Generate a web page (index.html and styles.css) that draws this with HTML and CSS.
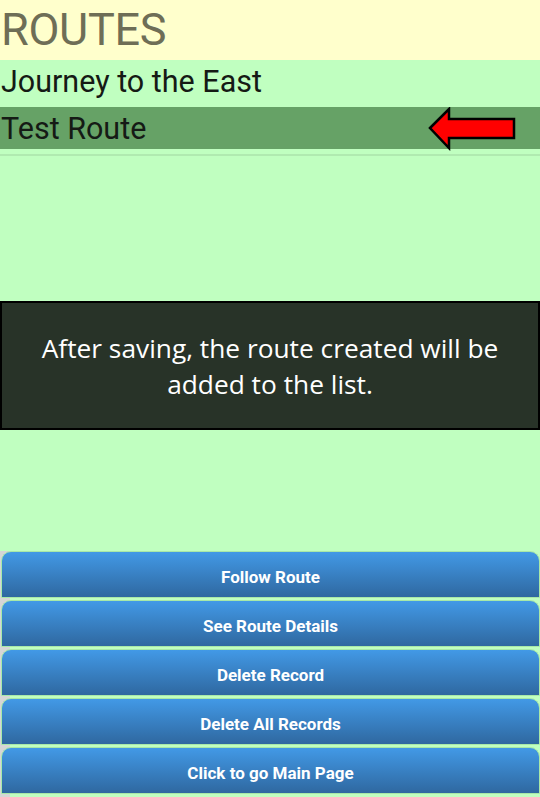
FILE: index.html
```html
<!DOCTYPE html>
<html>
<head>
<meta charset="utf-8">
<link rel="stylesheet" href="styles.css">
</head>
<body>
<div class="app">
  <header class="header"><h1 class="title">ROUTES</h1></header>
  <main class="content">
    <ul class="list">
      <li class="item">Journey to the East</li>
      <li class="item selected">Test Route
        <svg class="arrow" width="90" height="44" viewBox="0 0 90 44">
          <polygon points="2,21 21,2 21,12 86,12 86,31 21,31 21,41" fill="#ff0000" stroke="#000" stroke-width="2.5" stroke-linejoin="miter"/>
        </svg>
      </li>
    </ul>
    <div class="divider"></div>
    <div class="tip">After saving, the route created will be added to the list.</div>
  </main>
  <nav class="buttons">
    <button class="btn">Follow Route</button>
    <button class="btn">See Route Details</button>
    <button class="btn">Delete Record</button>
    <button class="btn">Delete All Records</button>
    <button class="btn">Click to go Main Page</button>
  </nav>
</div>
</body>
</html>
```
FILE: styles.css
```css
* { box-sizing: border-box; }
html, body { margin: 0; padding: 0; }
body {
  width: 540px;
  height: 797px;
  background: #c0ffc0;
  font-family: Roboto, "Liberation Sans", sans-serif;
  overflow: hidden;
}
.app {
  display: flex;
  flex-direction: column;
  height: 797px;
}
.header {
  background: #ffffcc;
  height: 60px;
  display: flex;
  align-items: center;
}
.title {
  margin: 0;
  padding-left: 1px;
  font-weight: 400;
  font-size: 45px;
  color: #6e6e56;
  line-height: 60px;
  letter-spacing: -0.3px;
}
.content {
  flex: 1;
  display: flex;
  flex-direction: column;
}
.list {
  list-style: none;
  margin: 0;
  padding: 0;
}
.item {
  position: relative;
  height: 47px;
  font-size: 30.5px;
  color: #151a15;
  line-height: 44px;
  padding-left: 1px;
}
.item.selected {
  height: 42px;
  line-height: 44px;
  background: #66a266;
}
.arrow {
  position: absolute;
  left: 428px;
  top: 0;
}
.divider {
  margin-top: 5px;
  height: 2px;
  background: #b0eab0;
}
.tip {
  margin-top: 145px;
  height: 129px;
  background: #283328;
  border: 2px solid #000;
  color: #fff;
  font-family: "Open Sans", "Liberation Sans", sans-serif;
  font-size: 26.3px;
  line-height: 36px;
  text-align: center;
  display: flex;
  align-items: center;
  justify-content: center;
  padding: 0 20px;
}
.buttons {
  display: flex;
  flex-direction: column;
  gap: 2px;
  padding-bottom: 3px;
  background: linear-gradient(to right, #d6d6d6 0, #d6d6d6 10px, transparent 10px);
}
.btn {
  height: 47px;
  margin: 0 0 0 1px;
  width: 539px;
  border: 1px solid #a8e8a8;
  border-radius: 10px 10px 0 0;
  background: linear-gradient(to bottom, #4299e6, #2f68a0);
  color: #fff;
  font-family: Roboto, "Liberation Sans", sans-serif;
  font-weight: 700;
  font-size: 17px;
  padding: 5px 0 0 0;
}
```
